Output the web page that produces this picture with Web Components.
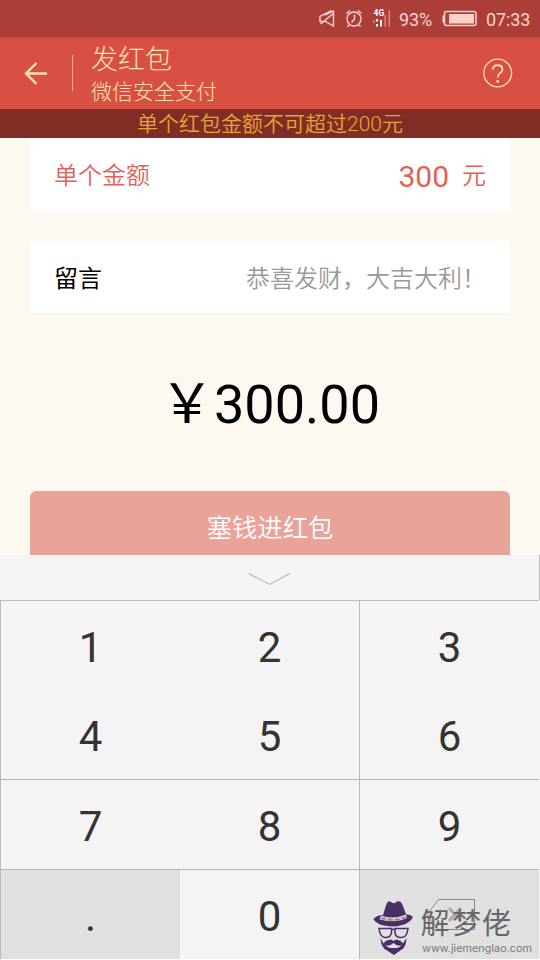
<!DOCTYPE html>
<html lang="zh-CN">
<head>
<meta charset="utf-8">
<title>发红包</title>
<style>
html,body{margin:0;padding:0}
body{width:540px;height:960px;overflow:hidden;background:#fdf9f1;font-family:Roboto,"Noto Sans CJK SC",sans-serif}
</style>
</head>
<body>
<red-packet-page></red-packet-page>
<script>
const define=(name,html)=>{
  const t=document.createElement('template');
  t.innerHTML=html;
  customElements.define(name,class extends HTMLElement{
    constructor(){super();this.attachShadow({mode:'open'}).append(t.content.cloneNode(true));}
  });
};

define('status-bar',`<style>
:host{display:flex;height:37px;background:#ab3f37;color:#fbd3cb;box-sizing:border-box;font-size:18px;line-height:39px}
svg{display:block;width:80px;height:37px;margin-left:314px;flex:none}
.pct{width:43px;margin-left:5px;letter-spacing:-.1px}
.bat{width:36px;margin-left:0}
.time{margin-left:8px;letter-spacing:-.1px}
</style>
<svg viewBox="314 0 80 37" fill="none" stroke="#fbd3cb" stroke-width="1.4">
<path d="M324.500 15.200 333.500 11V26L325.500 21.500H320V16.500L331.500 10.500M320.500 24 334 13"/>
<circle cx="354" cy="19" r="7"/><path d="M354.5 14.5V19L351.5 22.5M346.5 13.5 350 10.5M358 10.5 361.5 13.5M349 25 347.5 26.8M359 25 360.5 26.8"/>
<text x="373.5" y="16" font-family="Roboto" font-size="8.5" font-weight="700" fill="#fff" stroke="none">4G</text>
<path stroke="#d98982" d="M374 20V23M385.2 15V26.5M389.3 10V26.5" stroke-width="1.5"/><path stroke="#fff" d="M377 19V21.5M377 24V26.5M381 20V26.5" stroke-width="2"/>
</svg>
<span class="pct">93%</span>
<svg class="bat" viewBox="442 0 36 37"><rect x="444.5" y="11.5" width="31.5" height="14" rx="2" fill="none" stroke="#fbd3cb" stroke-width="1.5"/><path d="M442.5 15.5H444V22.5H442.5Z" fill="#fbd3cb"/><rect x="449" y="14" width="25" height="9.5" fill="#fbd3cb"/></svg>
<span class="time">07:33</span>`);

define('title-bar',`<style>
:host{display:flex;height:72px;background:#d75043;color:#fde1af;box-sizing:border-box;align-items:center;border-top:1px solid #c6483e;padding-bottom:2px}
.back{width:24px;height:24px;margin-left:24px}
.rule{width:1px;height:36px;background:#ecac8a;margin:0 18px 0 24px}
.names{flex:1;display:flex;flex-direction:column;font-weight:300;padding-top:4px}
.title{font-size:27px;line-height:34px}.sub{font-size:21px;line-height:30px}
.help{width:30px;height:30px;margin-right:27px}
</style>
<svg class="back" viewBox="0 0 24 24" fill="none" stroke="#fde1af" stroke-width="2.4"><path d="M23 12.5H2M12.5 2 2 12.5 12.5 23"/></svg>
<i class="rule"></i>
<div class="names"><span class="title"><slot name="title"></slot></span><span class="sub"><slot name="sub"></slot></span></div>
<svg class="help" viewBox="0 0 30 30" fill="none" stroke="#fde1af"><circle cx="14.7" cy="15" r="13.9" stroke-width="1.3"/><path d="M9.9 11.8C9.9 8.8 11.800 7.200 14.600 7.200S19.400 8.900 19.400 11.500C19.400 14.800 14.700 15.200 14.700 19.600" stroke-width="1.9"/><circle cx="14.7" cy="23.4" r="1.4" fill="#fde1af" stroke="none"/></svg>`);

define('notice-bar',`<style>
:host{display:block;height:29px;background:#802e25;color:#e9a435;font-size:21px;line-height:30px;text-align:center;font-weight:350}
</style><slot></slot>`);

define('form-row',`<style>
:host{display:flex;justify-content:space-between;box-sizing:border-box;height:73px;margin:0 30px;padding:0 24px;background:#fff;border-radius:3px;font-size:24px;line-height:76px}
</style><slot name="label"></slot><slot name="value"></slot>`);

define('pay-button',`<style>
:host{display:block;height:64px;margin:0 30px;border-radius:6px 6px 0 0;background:#e9a399;color:#fff;font-size:25.3px;line-height:75px;text-align:center;font-weight:350}
</style><slot></slot>`);

define('pad-key',`<style>
:host{display:flex;align-items:center;justify-content:center;color:#333;font-size:42px;line-height:86px;padding-top:3px;box-sizing:border-box}
:host([dim]){background:#e0e0e0}
</style><slot></slot>`);

define('number-pad',`<style>
:host{display:flex;flex-direction:column;height:405px;background:#f4f4f4}
.fold{height:45px;box-sizing:border-box;border-right:1px solid #bbb}
.fold svg{display:block;width:540px;height:45px}
.keys{display:grid;grid-template-columns:179px 179px 180px;grid-template-rows:90px 89px 90px 89px;border-top:1px solid #bababa;border-left:1px solid #bababa;height:359px;box-sizing:border-box;width:539px}
.c{border-left:1px solid #bababa}
.b{border-bottom:1px solid #b4b4b4}
.low{padding-top:5px}
.del{padding:0 0 2px}
.end{height:1px;background:#fff}
</style>
<div class="fold"><svg viewBox="0 0 540 45" fill="none" stroke="#b5b5b5" stroke-width="1.1"><path d="M249 18.5 269.5 29.5 290 18.5"/></svg></div>
<div class="keys">
<pad-key>1</pad-key><pad-key>2</pad-key><pad-key class="c">3</pad-key>
<pad-key class="b">4</pad-key><pad-key class="b">5</pad-key><pad-key class="b c">6</pad-key>
<pad-key class="b low">7</pad-key><pad-key class="b low">8</pad-key><pad-key class="b c low">9</pad-key>
<pad-key dim class="low">.</pad-key><pad-key class="low">0</pad-key><pad-key dim class="c del"><svg width="50" height="34" viewBox="0 0 50 34" fill="none"><path d="M13.500 2.5H49.500V32.5H13.500L2 17.5Z" stroke="#888"/><path d="M24 11 36 24M36 11 24 24" stroke="#aaa" stroke-width="3"/></svg></pad-key>
</div><div class="end"></div>`);

define('site-mark',`<style>
:host{position:absolute;left:370px;top:895px;width:170px;height:64px}
svg{display:block}
</style>
<svg width="170" height="64" viewBox="370 895 170 64">
<path fill="#492f68" d="M383 915 386.500 904Q388 900 391 902Q394 904.500 397 901.500Q401 900 403 906L406 914.500Q411 914 413 917Q409 925.500 393 926.500Q377 926 373.500 919Q377 915 383 915Z"/>
<path d="M381 915.500Q393 920 406 914.500L407 918Q395 923.500 379.500 919.500Z" fill="#e3cfd0"/>
<path d="M381 918Q395 922 407 916.500" fill="none" stroke="#3f9b9b" stroke-width="1.8" stroke-dasharray="3 4"/>
<path d="M384 918.5Q395 922 407 917" fill="none" stroke="#e36c67" stroke-width="2" stroke-dasharray="2 5"/>
<g fill="none" stroke="#492f68" stroke-width="1.5"><path d="M379 928.5H391.5V933Q390 938 385.5 937.5Q380 937.5 379 928.5ZM395 928.5H408Q407 937.5 401.5 937.5Q396 938 395 933ZM391.5 930Q393 928.5 395 930"/></g>
<path fill="#492f68" fill-rule="evenodd" d="M380.5 938 383.5 943.500Q385.5 940 391 939.5L393.5 941 396 939.5Q401 940 403 943.500L406.500 938Q406 948 401 950L394 955 387 950.500Q381 948 380.500 938ZM385.500 945Q389 947 393.500 943Q398 947 401.500 945Q400 947.500 397 948H390Q387 947.500 385.500 945Z"/>
<g fill="#666" font-family="Noto Sans CJK SC,sans-serif" font-weight="400" font-size="29"><text x="420.500" y="933.500">解</text><text x="452" y="933.500">梦</text><text x="482" y="933.500">佬</text></g>
<text x="422" y="952" font-family="Inter,sans-serif" font-size="10.500" fill="#777" textLength="110" lengthAdjust="spacingAndGlyphs">www.jiemenglao.com</text>
</svg>`);

define('red-packet-page',`<style>
:host{display:flex;flex-direction:column;width:540px;height:960px;position:relative;overflow:hidden;background:#fdf9f1}
.label{font-weight:350}.red{color:#e0625a}
.amt{display:flex;gap:13px}.num{font-size:30px;line-height:77px}
.hint{color:#999;font-weight:350}
.total{height:178px;line-height:184px;font-size:54px;text-align:center;color:#000;font-weight:400}
form-row+form-row{margin-top:30px;height:72px}
</style>
<status-bar></status-bar>
<title-bar><span slot="title">发红包</span><span slot="sub">微信安全支付</span></title-bar>
<notice-bar>单个红包金额不可超过200元</notice-bar>
<form-row><span slot="label" class="label red">单个金额</span><span slot="value" class="amt red"><span class="num">300</span><span class="label">元</span></span></form-row>
<form-row><span slot="label">留言</span><span slot="value" class="hint">恭喜发财，大吉大利！</span></form-row>
<div class="total">￥300.00</div>
<pay-button>塞钱进红包</pay-button>
<number-pad></number-pad>
<site-mark></site-mark>`);
</script>
</body>
</html>
